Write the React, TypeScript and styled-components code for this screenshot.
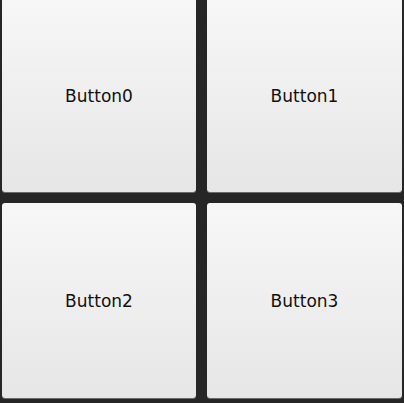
import React from "react";
import styled, { createGlobalStyle } from "styled-components";

const Global = createGlobalStyle`
  html, body { margin: 0; padding: 0; background: #262626; overflow: hidden; }
  #root { width: 404px; height: 403px; overflow: hidden; }
`;

const Grid = styled.div`
  display: grid;
  grid-template-columns: 194px 195px;
  grid-template-rows: 195px 195px;
  gap: 11px;
  padding: 0 2px 5px 2px;
  margin-top: -3px;
  width: 404px;
  height: 406px;
  box-sizing: border-box;
  background: #262626;
`;

const Button = styled.button`
  display: flex;
  align-items: center;
  justify-content: center;
  margin: 0;
  padding: 0;
  border: none;
  border-radius: 3px;
  background: linear-gradient(to bottom, #f7f7f7 0%, #e6e6e6 100%);
  box-shadow: 0 1px 0 #6a6a6a;
  font-family: "DejaVu Sans", Verdana, sans-serif;
  font-size: 17px;
  color: #111;
  cursor: pointer;
`;

const Label = styled.span<{ $shift: number }>`
  transform: translateY(${(p) => p.$shift}px);
`;

export default function App() {
  return (
    <>
      <Global />
      <Grid>
        {[0, 1, 2, 3].map((i) => (
          <Button key={i}>
            <Label $shift={i < 2 ? 1 : 0}>Button{i}</Label>
          </Button>
        ))}
      </Grid>
    </>
  );
}
